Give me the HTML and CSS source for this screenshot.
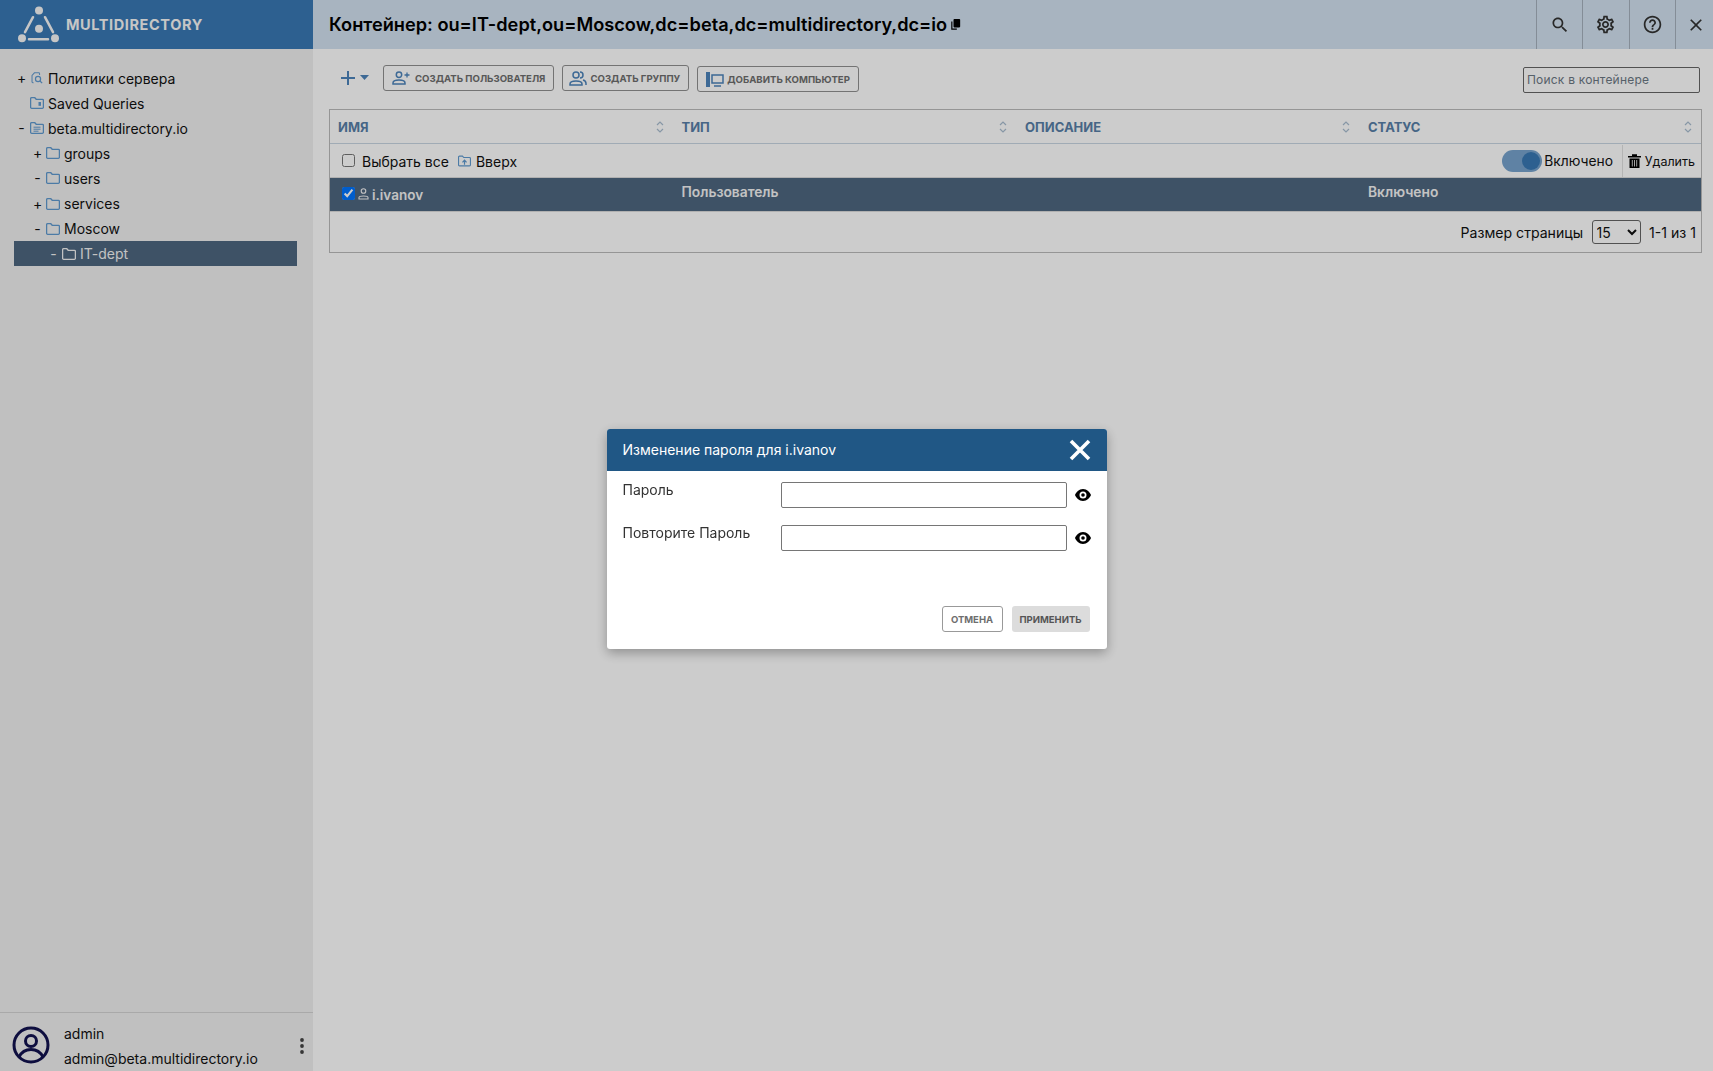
FILE: index.html
```html
<!DOCTYPE html>
<html lang="ru">

<head>
    <meta charset="UTF-8">
    <title>MultiDirectory</title>
    <link rel="stylesheet" href="styles.css">
</head>

<body>
    <svg class="defs" width="0" height="0">
        <symbol id="folder" viewBox="0 0 14 12">
            <path d="M1.6.7h3.2l1.4 1.6h6.2q1 0 1 1V10.3q0 1-1 1H1.6q-1 0-1-1V1.7q0-1 1-1z" fill="none" stroke="currentColor" stroke-width="1.3" />
        </symbol>
    </svg>

    <div class="app">
        <aside class="sidebar">
            <div class="brand">
                <svg class="brand-logo" width="44" height="44" viewBox="0 0 44 44">
                    <circle cx="21" cy="7.500" r="4" />
                    <circle cx="21" cy="25.800" r="4" />
                    <circle cx="4" cy="35.300" r="4" />
                    <circle cx="37" cy="35.300" r="4" />
                    <path d="M15 14.200 7 29.200M27 14.200l8 15M11 36.200h19" stroke="#f8f8f8" stroke-width="2.500" stroke-linecap="round" fill="none" />
                </svg>
                <span class="brand-name">MULTIDIRECTORY</span>
            </div>

            <ul class="tree">
                <li class="tree-row lvl-0"><span class="tw">+</span>
                    <svg class="ti" viewBox="0 0 14 14"><path d="M3 12.500H2.200q-1 0-1-1V4L4 1h5q1 0 1 1v1.500" fill="none" stroke="currentColor" stroke-width="1.200" /><circle cx="8.200" cy="8.200" r="3" fill="none" stroke="currentColor" stroke-width="1.400" /><path d="m10.500 10.500 2.500 2.500" stroke="currentColor" stroke-width="1.500" /></svg>
                    Политики сервера</li>
                <li class="tree-row lvl-0"><span class="tw"></span>
                    <svg class="ti" viewBox="0 0 14 12"><path d="M1.600.7h3.200l1.400 1.600h6.200q1 0 1 1V10.300q0 1-1 1H1.600q-1 0-1-1V1.700q0-1 1-1z" fill="none" stroke="currentColor" stroke-width="1.300" /><path d="M8.500 5h2.500v3.800H8.500z" fill="currentColor" /></svg>
                    Saved Queries</li>
                <li class="tree-row lvl-0"><span class="tw">-</span>
                    <svg class="ti" viewBox="0 0 14 12"><path d="M1.600.7h3.200l1.400 1.600h6.200q1 0 1 1V10.300q0 1-1 1H1.600q-1 0-1-1V1.700q0-1 1-1z" fill="none" stroke="currentColor" stroke-width="1.300" /><path d="M3.500 5.200h7M3.500 7.200h7M3.500 9.200h5" stroke="currentColor" stroke-width="1" /></svg>
                    beta.multidirectory.io</li>
                <li class="tree-row lvl-1"><span class="tw">+</span><svg class="ti"><use href="#folder" /></svg>groups</li>
                <li class="tree-row lvl-1"><span class="tw">-</span><svg class="ti"><use href="#folder" /></svg>users</li>
                <li class="tree-row lvl-1"><span class="tw">+</span><svg class="ti"><use href="#folder" /></svg>services</li>
                <li class="tree-row lvl-1"><span class="tw">-</span><svg class="ti"><use href="#folder" /></svg>Moscow</li>
                <li class="tree-row lvl-2 selected"><span class="tw">-</span><svg class="ti"><use href="#folder" /></svg>IT-dept</li>
            </ul>

            <div class="account">
                <svg class="avatar" width="38" height="38" viewBox="0 0 38 38">
                    <circle cx="19" cy="19" r="17" fill="none" stroke="currentColor" stroke-width="3" />
                    <circle cx="19" cy="15" r="5.500" fill="none" stroke="currentColor" stroke-width="3" />
                    <path d="M7 31c3-6 7-7.500 12-7.500S28 25 31 31" fill="none" stroke="currentColor" stroke-width="3" />
                </svg>
                <div class="account-text">
                    <div>admin</div>
                    <div>admin@beta.multidirectory.io</div>
                </div>
                <svg class="account-more" width="4" height="16" viewBox="0 0 4 16">
                    <circle cx="2" cy="2" r="1.900" />
                    <circle cx="2" cy="8" r="1.900" />
                    <circle cx="2" cy="14" r="1.900" />
                </svg>
            </div>
        </aside>

        <main class="content">
            <header class="topbar">
                <h1 class="crumb">Контейнер: ou=IT-dept,ou=Moscow,dc=beta,dc=multidirectory,dc=io</h1>
                <svg class="crumb-copy" width="10" height="11" viewBox="0 0 12 13">
                    <path d="M4 0h6q1 0 1 1v8q0 1-1 1H4q-1 0-1-1V1q0-1 1-1z" />
                    <path d="M1 3v9h6" fill="none" stroke="#000" stroke-width="1.400" />
                </svg>
                <div class="topbar-actions">
                    <button class="top-btn"><svg width="20" height="20" viewBox="0 0 24 24"><path d="M15.500 14h-.79l-.28-.27C15.410 12.590 16 11.110 16 9.500 16 5.910 13.090 3 9.500 3S3 5.910 3 9.500 5.910 16 9.500 16c1.610 0 3.090-.59 4.230-1.570l.27.28v.79l5 4.990L20.490 19l-4.990-5zm-6 0C7.010 14 5 11.990 5 9.500S7.010 5 9.500 5 14 7.010 14 9.500 11.990 14 9.500 14z" /></svg></button>
                    <button class="top-btn"><svg width="21" height="21" viewBox="0 0 24 24"><path d="M19.430 12.980c.04-.32.07-.64.07-.98 0-.34-.03-.66-.07-.98l2.110-1.650c.19-.15.24-.42.12-.64l-2-3.460c-.09-.16-.26-.25-.44-.25-.06 0-.12.01-.17.03l-2.490 1c-.52-.4-1.080-.73-1.690-.98l-.38-2.650C14.460 2.180 14.250 2 14 2h-4c-.25 0-.46.18-.49.42l-.38 2.650c-.61.25-1.170.59-1.690.98l-2.490-1c-.06-.02-.12-.03-.18-.03-.17 0-.34.09-.43.25l-2 3.460c-.13.22-.07.49.12.64l2.110 1.650c-.04.32-.07.65-.07.98 0 .33.03.66.07.98l-2.110 1.650c-.19.15-.24.42-.12.64l2 3.460c.09.16.26.25.44.25.06 0 .12-.01.17-.03l2.490-1c.52.4 1.080.73 1.690.98l.38 2.650c.03.24.24.42.49.42h4c.25 0 .46-.18.49-.42l.38-2.650c.61-.25 1.170-.59 1.690-.98l2.490 1c.06.02.12.03.18.03.17 0 .34-.09.43-.25l2-3.460c.12-.22.07-.49-.12-.64l-2.110-1.650zm-1.980-1.710c.04.31.05.52.05.73 0 .21-.02.43-.05.73l-.14 1.130.89.7 1.080.84-.7 1.210-1.270-.51-1.040-.42-.9.68c-.43.32-.84.56-1.250.73l-1.060.43-.16 1.130-.2 1.350h-1.400l-.19-1.350-.16-1.130-1.060-.43c-.43-.18-.83-.41-1.230-.71l-.91-.7-1.060.43-1.270.51-.7-1.210 1.080-.84.89-.7-.14-1.130c-.03-.31-.05-.54-.05-.74s.02-.43.05-.73l.14-1.130-.89-.7-1.080-.84.7-1.210 1.270.51 1.040.42.9-.68c.43-.32.84-.56 1.250-.73l1.060-.43.16-1.130.2-1.350h1.390l.19 1.350.16 1.130 1.060.43c.43.18.83.41 1.230.71l.91.7 1.060-.43 1.270-.51.7 1.210-1.070.85-.89.7.14 1.130zM12 8c-2.210 0-4 1.790-4 4s1.790 4 4 4 4-1.790 4-4-1.790-4-4-4zm0 6c-1.100 0-2-.9-2-2s.9-2 2-2 2 .9 2 2-.9 2-2 2z" /></svg></button>
                    <button class="top-btn"><svg width="21" height="21" viewBox="0 0 24 24"><path d="M11 18h2v-2h-2v2zm1-16C6.480 2 2 6.480 2 12s4.480 10 10 10 10-4.480 10-10S17.520 2 12 2zm0 18c-4.410 0-8-3.590-8-8s3.590-8 8-8 8 3.590 8 8-3.590 8-8 8zm0-14c-2.210 0-4 1.790-4 4h2c0-1.100.9-2 2-2s2 .9 2 2c0 2-3 1.750-3 5h2c0-2.250 3-2.500 3-5 0-2.210-1.790-4-4-4z" /></svg></button>
                    <button class="top-btn top-btn-last"><svg width="20" height="20" viewBox="0 0 24 24"><path d="M19 6.410 17.590 5 12 10.590 6.410 5 5 6.410 10.590 12 5 17.590 6.410 19 12 13.410 17.590 19 19 17.590 13.410 12z" /></svg></button>
                </div>
            </header>

            <div class="toolbar">
                <span class="add-menu">
                    <svg width="14" height="14" viewBox="0 0 14 14"><path d="M7 0v14M0 7h14" stroke="currentColor" stroke-width="2" /></svg>
                    <svg width="9" height="5" viewBox="0 0 9 5"><path d="M0 0h9L4.500 5z" fill="currentColor" /></svg>
                </span>
                <button class="tool-btn tool-btn-user">
                    <svg width="18" height="14" viewBox="0 0 18 14"><circle cx="7" cy="3.700" r="2.700" fill="none" stroke="currentColor" stroke-width="1.500" /><path d="M1 13v-1c0-2 2.500-3 6-3s6 1 6 3v1z" fill="none" stroke="currentColor" stroke-width="1.500" /><path d="M15 1.500v5M12.500 4h5" stroke="currentColor" stroke-width="1.300" /></svg>
                    Создать пользователя</button>
                <button class="tool-btn tool-btn-group">
                    <svg width="18" height="15" viewBox="0 0 18 15"><circle cx="7" cy="4" r="3" fill="none" stroke="currentColor" stroke-width="1.500" /><path d="M1 14v-1c0-2 2.500-3 6-3s6 1 6 3v1z" fill="none" stroke="currentColor" stroke-width="1.500" /><path d="M11 1a3 3 0 0 1 0 6M14 9c2 .5 3 1.700 3 3.500V14" fill="none" stroke="currentColor" stroke-width="1.500" /></svg>
                    Создать группу</button>
                <button class="tool-btn tool-btn-low">
                    <svg width="18" height="15" viewBox="0 0 18 15"><path d="M0 0h4v15H0z" fill="currentColor" /><path d="M6 3h11v8H6zM8 14h7" fill="none" stroke="currentColor" stroke-width="1.500" /></svg>
                    Добавить компьютер</button>
                <input class="search" type="text" placeholder="Поиск в контейнере">
            </div>

            <section class="grid">
                <div class="grid-row grid-head">
                    <div class="col">Имя<svg class="sort"><use href="#sort" /></svg></div>
                    <div class="col">Тип<svg class="sort"><use href="#sort" /></svg></div>
                    <div class="col">Описание<svg class="sort"><use href="#sort" /></svg></div>
                    <div class="col">Статус<svg class="sort"><use href="#sort" /></svg></div>
                </div>

                <div class="grid-tools">
                    <label class="check-all"><input type="checkbox">Выбрать все</label>
                    <span class="go-up">
                        <svg width="13" height="12" viewBox="0 0 14 12"><path d="M1.600.7h3.200l1.400 1.600h6.200q1 0 1 1V10.300q0 1-1 1H1.600q-1 0-1-1V1.700q0-1 1-1z" fill="none" stroke="currentColor" stroke-width="1.200" /><path d="M7 10V5.500M4.800 7.500 7 5l2.200 2.500" fill="none" stroke="currentColor" stroke-width="1.300" /></svg>
                        <span>Вверх</span></span>
                    <span class="switch"><span class="switch-knob"></span></span>
                    <span class="switch-label">Включено</span>
                    <span class="delete">
                        <svg width="13" height="14" viewBox="0 0 13 14"><path d="M0 2h13v1.500H0zM4 .3h5V2H4zM1.500 4.500h10V14h-10z" /><path d="M4.300 6v6.500M6.500 6v6.500M8.700 6v6.500" stroke="#ccc" stroke-width="1" /></svg>
                        Удалить</span>
                </div>

                <div class="grid-row grid-item">
                    <div class="col col-name">
                        <input type="checkbox" checked>
                        <svg width="11" height="12" viewBox="0 0 11 12"><circle cx="5.500" cy="3" r="2.300" fill="none" stroke="currentColor" stroke-width="1.100" /><path d="M1 11V9.500C1 8.500 3 8 5.500 8S10 8.500 10 9.500V11z" fill="none" stroke="currentColor" stroke-width="1.100" /></svg>
                        <span>i.ivanov</span>
                    </div>
                    <div class="col">Пользователь</div>
                    <div class="col"></div>
                    <div class="col">Включено</div>
                </div>

                <div class="grid-foot">
                    <span>Размер страницы</span>
                    <select class="page-size">
                        <option>15</option>
                    </select>
                    <span>1-1 из 1</span>
                </div>
            </section>
        </main>
    </div>

    <svg class="defs" width="0" height="0">
        <symbol id="sort" viewBox="0 0 8 14">
            <path d="M1 5l3-3 3 3M1 9l3 3 3-3" fill="none" stroke="currentColor" stroke-width="1.200" />
        </symbol>
    </svg>

    <!-- Диалог смены пароля -->
    <div class="overlay">
        <div class="dialog">
            <div class="dialog-head">
                <span class="dialog-title">Изменение пароля для i.ivanov</span>
                <svg width="22" height="22" viewBox="0 0 22 22"><path d="M2 2l18 18M20 2 2 20" stroke="#fff" stroke-width="3.600" /></svg>
            </div>
            <div class="dialog-body">
                <div class="field">
                    <label>Пароль</label>
                    <input type="password">
                    <svg class="eye"><use href="#eye" /></svg>
                </div>
                <div class="field">
                    <label>Повторите Пароль</label>
                    <input type="password">
                    <svg class="eye"><use href="#eye" /></svg>
                </div>
            </div>
            <div class="dialog-foot">
                <button class="btn-cancel">Отмена</button>
                <button class="btn-apply">Применить</button>
            </div>
        </div>
    </div>

    <svg class="defs" width="0" height="0">
        <symbol id="eye" viewBox="0 0 16 12">
            <path fill-rule="evenodd" d="M8 0c4 0 7 3.500 8 6-1 2.500-4 6-8 6S1 8.500 0 6c1-2.500 4-6 8-6zm0 2.500a3.500 3.500 0 1 0 0 7 3.500 3.500 0 0 0 0-7z" />
            <circle cx="8" cy="6" r="1.800" />
        </symbol>
    </svg>
</body>

</html>
```

FILE: styles.css
```css
* {
    box-sizing: border-box;
}

body {
    margin: 0;
    height: 1071px;
    overflow: hidden;
    font-family: Inter, "Noto Sans", sans-serif;
    font-size: 14px;
    color: #111;
    background: #fff;
}

.defs {
    display: block;
    height: 0;
}

.app {
    display: flex;
    height: 1071px;
}

/* Боковая панель */

.sidebar {
    display: flex;
    flex-direction: column;
    width: 313px;
    flex-shrink: 0;
    background: #f0f0f0;
}

.brand {
    display: flex;
    align-items: center;
    height: 49px;
    padding-left: 18px;
    background: #3979b4;
}

.brand-logo {
    fill: #f8f8f8;
    flex-shrink: 0;
}

.brand-name {
    margin-left: 4px;
    font-size: 14.500px;
    font-weight: 700;
    letter-spacing: 0.6px;
    color: #f8f8f8;
}

.tree {
    list-style: none;
    flex: 1;
    margin: 0;
    padding: 16.500px 0 0 14px;
}

.tree-row {
    display: flex;
    align-items: center;
    width: 283px;
    height: 25.100px;
    white-space: nowrap;
}

.tw {
    width: 9px;
    margin-right: 4px;
    text-align: center;
    line-height: 1;
}

.ti {
    width: 14px;
    height: 12px;
    margin: 0 4px 0 0;
    color: #609ad0;
}

.lvl-0 {
    padding-left: 3px;
}

.lvl-1 {
    padding-left: 19px;
}

.lvl-2 {
    padding-left: 35px;
}

.selected {
    background: #4e6780;
    color: #f4f4f4;
}

.selected .ti {
    color: #f4f4f4;
}

.account {
    display: flex;
    align-items: center;
    height: 59px;
    padding: 0 9px 0 12px;
    border-top: 1px solid #d4d4d4;
}

.avatar {
    color: #12124f;
    flex-shrink: 0;
    margin-top: 5px;
}

.account-text {
    flex: 1;
    margin-left: 14px;
    line-height: 25px;
    padding-top: 7px;
}

.account-more {
    fill: #444;
    margin-top: 8px;
}

/* Основная часть */

.content {
    flex: 1;
    min-width: 0;
}

.topbar {
    display: flex;
    align-items: center;
    height: 49px;
    padding-left: 16px;
    background: #d3e2f0;
}

.crumb {
    margin: 0 0 1px;
    font-size: 18.200px;
    font-weight: 600;
    white-space: nowrap;
    color: #000;
}

.crumb-copy {
    margin-left: 4px;
}

.topbar-actions {
    display: flex;
    height: 100%;
    margin-left: auto;
}

.top-btn {
    display: flex;
    align-items: center;
    justify-content: center;
    width: 46.500px;
    padding: 0;
    border: none;
    border-left: 1px solid #a5b1bd;
    background: none;
    fill: #333;
}

.top-btn:first-child {
    width: 46px;
}

.top-btn-last {
    width: 38px;
    justify-content: flex-end;
    padding-right: 7px;
}

.toolbar {
    display: flex;
    align-items: flex-start;
    height: 60px;
    padding: 16px 13px 0 16px;
}

.add-menu {
    display: flex;
    align-items: center;
    gap: 5px;
    width: 54px;
    height: 25px;
    padding-left: 12px;
    color: #4d84bb;
}

.tool-btn {
    display: flex;
    align-items: center;
    gap: 5px;
    height: 26px;
    margin-right: 8px;
    padding: 0 8px;
    border: 1px solid #909090;
    border-radius: 3px;
    background: #fff;
    font-family: inherit;
    font-size: 9.600px;
    font-weight: 700;
    text-transform: uppercase;
    color: #6e6e6e;
}

.tool-btn svg {
    color: #4d84bb;
}

.tool-btn-group {
    gap: 3px;
    padding-left: 6px;
}

.tool-btn-low {
    gap: 3px;
    margin-top: 1px;
}

.search {
    width: 177px;
    height: 26px;
    margin-top: 2px;
    margin-left: auto;
    padding: 0 3px 2px;
    border: 1px solid #666;
    border-radius: 2px;
    font-family: inherit;
    font-size: 12px;
    letter-spacing: 0.2px;
}

.search::placeholder {
    color: #6c7884;
}

.grid {
    margin: 0 11px 0 16px;
    border: 1px solid #bbb;
}

.grid-row {
    display: grid;
    grid-template-columns: 343.500px 343.500px 343px 1fr;
}

.grid-head {
    height: 34px;
    border-bottom: 1px solid #c8d6e3;
    font-size: 13px;
    font-weight: 700;
    text-transform: uppercase;
    color: #587fa8;
}

.col {
    display: flex;
    align-items: center;
    justify-content: space-between;
    padding: 0 10px 0 8px;
}

.col:last-child {
    padding-right: 9px;
}

.sort {
    width: 8px;
    height: 14px;
    color: #a9bdd0;
}

.grid-tools {
    display: flex;
    align-items: center;
    height: 34px;
    padding: 1px 0 0 12px;
    border-bottom: 1px solid #ddd;
}

.check-all {
    display: flex;
    align-items: center;
}

.check-all input {
    width: 13px;
    height: 13px;
    margin: 0 7px 2px 0;
}

.go-up {
    display: flex;
    align-items: center;
    gap: 5px;
    margin-left: 9px;
}

.go-up svg {
    color: #609ad0;
}

.switch {
    display: flex;
    align-items: center;
    justify-content: flex-end;
    width: 40px;
    height: 22px;
    margin-left: auto;
    padding-right: 2px;
    border-radius: 11px;
    background: #77a3cd;
}

.switch-knob {
    width: 18px;
    height: 18px;
    border-radius: 50%;
    background: #3979b4;
}

.switch-label {
    margin-left: 2px;
    padding-right: 9px;
    font-size: 13.800px;
}

.delete {
    display: flex;
    align-items: center;
    justify-content: flex-end;
    gap: 4px;
    width: 79px;
    height: 32px;
    padding: 0 6px 0 0;
    border-left: 1px solid #e2e2e2;
    font-size: 12.500px;
}

.grid-item {
    height: 33px;
    background: #4e6780;
    font-weight: 600;
    font-size: 13.800px;
    color: #f4f4f4;
}

.grid-item .col {
    padding-bottom: 5px;
}

.grid-item .col-name {
    justify-content: flex-start;
    padding: 0 0 2px 12px;
    font-size: 13.500px;
}

.col-name input {
    width: 13px;
    height: 13px;
    margin: 0 3px 0 0;
}

.col-name span {
    margin-left: 3px;
    padding-top: 2px;
}

.grid-foot {
    display: flex;
    align-items: center;
    justify-content: flex-end;
    gap: 8.500px;
    height: 41px;
    padding-right: 5px;
    border-top: 1px solid #ddd;
    font-size: 14.100px;
}

.page-size {
    width: 49px;
    height: 24px;
    border: 1px solid #666;
    border-radius: 3px;
    background: #fff;
    font-family: inherit;
    font-size: 14px;
    color: #111;
}

/* Диалог */

.overlay {
    position: fixed;
    inset: 0;
    display: flex;
    align-items: center;
    justify-content: center;
    padding-top: 7px;
    background: rgba(0, 0, 0, 0.2);
}

.dialog {
    display: flex;
    flex-direction: column;
    width: 500px;
    height: 220px;
    border-radius: 3px;
    background: #fff;
    box-shadow: 0 4px 12px rgba(0, 0, 0, 0.3);
    overflow: hidden;
}

.dialog-head {
    display: flex;
    align-items: center;
    justify-content: space-between;
    height: 42px;
    padding: 0 16px;
    background: #205785;
    font-weight: 400;
    font-size: 14px;
    color: #fff;
}

.dialog-title {
    padding-bottom: 1px;
}

.dialog-body {
    flex: 1;
    padding: 11px 16px 0;
}

.field {
    display: flex;
    align-items: flex-start;
    height: 43px;
}

.field label {
    width: 158px;
    line-height: 16px;
    color: #333;
}

.field input {
    width: 286px;
    height: 26px;
    border: 1px solid #767676;
    border-radius: 2px;
}

.eye {
    width: 16px;
    height: 12px;
    margin: 7px 0 0 8px;
}

.dialog-foot {
    display: flex;
    justify-content: flex-end;
    gap: 9px;
    padding: 0 17px 17px;
}

.btn-cancel,
.btn-apply {
    height: 26px;
    border-radius: 3px;
    font-family: inherit;
    font-size: 9.500px;
    font-weight: 700;
    text-transform: uppercase;
}

.btn-cancel {
    width: 61px;
    border: 1px solid #999;
    background: #fff;
    color: #6e6e6e;
}

.btn-apply {
    width: 78px;
    border: none;
    background: #dcdcdc;
    color: #555;
}
```
